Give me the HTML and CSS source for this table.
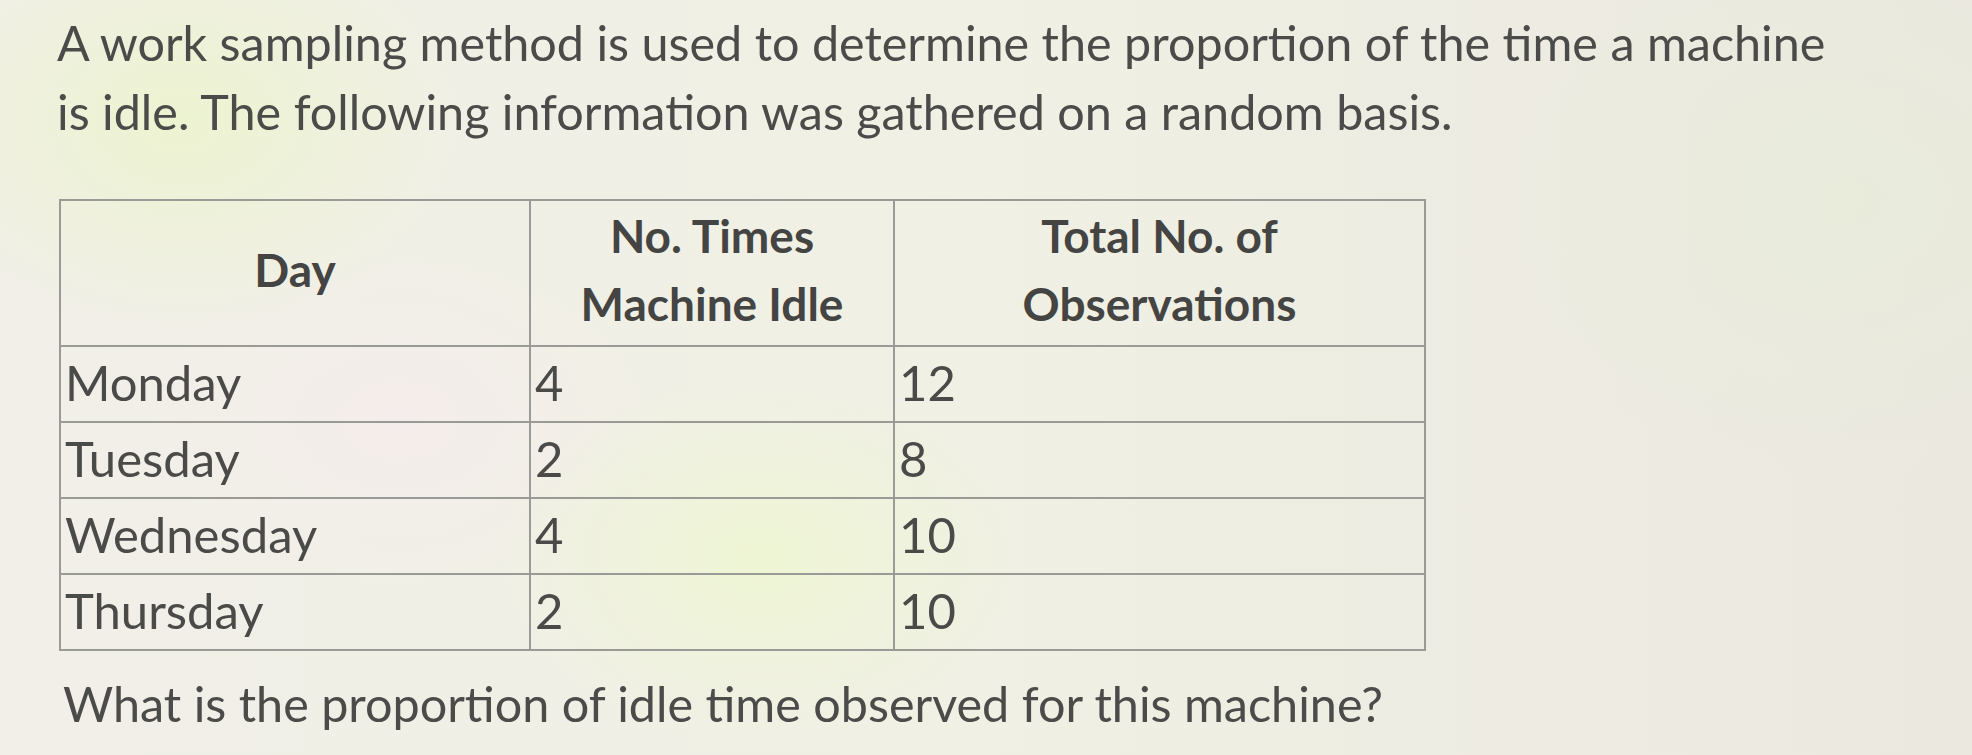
FILE: index.html
```html
<!DOCTYPE html>
<html lang="en">
<head>
<meta charset="utf-8">
<title>Work sampling</title>
<link rel="stylesheet" href="styles.css">
</head>
<body>
<main class="page">
  <p class="intro">A work sampling method is used to determine the proportion of the time a machine is idle. The following information was gathered on a random basis.</p>
  <table class="data">
    <thead>
      <tr>
        <th class="c1">Day</th>
        <th class="c2">No. Times<br>Machine Idle</th>
        <th class="c3">Total No. of<br>Observations</th>
      </tr>
    </thead>
    <tbody>
      <tr><td>Monday</td><td>4</td><td>12</td></tr>
      <tr><td>Tuesday</td><td>2</td><td>8</td></tr>
      <tr><td>Wednesday</td><td>4</td><td>10</td></tr>
      <tr><td>Thursday</td><td>2</td><td>10</td></tr>
    </tbody>
  </table>
  <p class="question">What is the proportion of idle time observed for this machine?</p>
</main>
</body>
</html>
```

FILE: styles.css
```css
html, body {
  margin: 0;
  padding: 0;
}
body {
  width: 1972px;
  height: 755px;
  overflow: hidden;
  font-family: Lato, "Open Sans", sans-serif;
  color: #4b4b4a;
  background:
    radial-gradient(ellipse 420px 300px at 180px 120px, rgba(236,244,206,0.9), rgba(236,244,206,0) 70%),
    radial-gradient(ellipse 380px 260px at 760px 560px, rgba(238,246,210,0.9), rgba(238,246,210,0) 70%),
    radial-gradient(ellipse 360px 240px at 400px 420px, rgba(246,236,236,0.8), rgba(246,236,236,0) 70%),
    radial-gradient(ellipse 500px 400px at 1850px 200px, rgba(232,236,218,0.9), rgba(232,236,218,0) 70%),
    linear-gradient(90deg, #f1efe8 0%, #f0f0e4 50%, #ebe8e0 100%);
}
.page {
  padding: 8px 0 0 57px;
}
.intro {
  margin: 0;
  width: 1790px;
  font-size: 48.5px;
  line-height: 69px;
}
.data {
  margin: 53px 0 0 2px;
  border-collapse: collapse;
  font-size: 49px;
}
.data th, .data td {
  border: 2px solid #9a9a96;
  padding: 0 0 4px 4px;
}
.data th {
  height: 138px;
  font-weight: 700;
  font-size: 46px;
  line-height: 68px;
  text-align: center;
  color: #444443;
  padding: 0 0 6px 0;
}
.data td {
  height: 70px;
  text-align: left;
  vertical-align: middle;
  font-weight: 400;
  line-height: 60px;
  color: #4a4a48;
}
.c1 { width: 468px; }
.c2 { width: 362px; }
.c3 { width: 529px; }
.question {
  margin: 22px 0 0 6px;
  font-size: 48.5px;
  line-height: 60px;
}
```
